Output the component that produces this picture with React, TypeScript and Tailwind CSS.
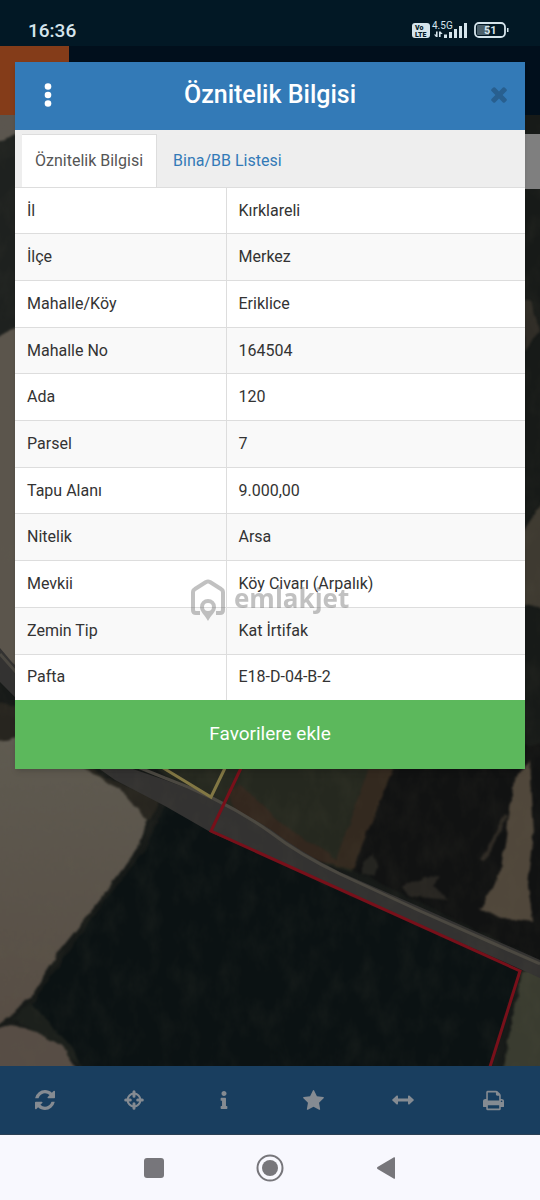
import React from 'react';
import { FaInfo } from 'react-icons/fa';

const attributes = [
  ['İl', 'Kırklareli'],
  ['İlçe', 'Merkez'],
  ['Mahalle/Köy', 'Eriklice'],
  ['Mahalle No', '164504'],
  ['Ada', '120'],
  ['Parsel', '7'],
  ['Tapu Alanı', '9.000,00'],
  ['Nitelik', 'Arsa'],
  ['Mevkii', 'Köy Civarı (Arpalık)'],
  ['Zemin Tip', 'Kat İrtifak'],
  ['Pafta', 'E18-D-04-B-2'],
];

const RefreshIcon = () => (
  <svg viewBox="0 0 1536 1536" className="size-5" fill="currentColor">
    <path d="M1511 928q0 5-1 7-64 268-268 434.5T764 1536q-146 0-282.5-55T238 1324l-129 129q-19 19-45 19t-45-19-19-45V960q0-26 19-45t45-19h448q26 0 45 19t19 45-19 45l-137 137q71 66 161 102t187 36q134 0 250-65t186-179q11-17 53-117 8-23 30-23h192q13 0 22.5 9.5t9.5 22.5zm25-800v448q0 26-19 45t-45 19h-448q-26 0-45-19t-19-45 19-45l138-138Q969 256 768 256q-134 0-250 65T332 500q-11 17-53 117-8 23-30 23H50q-13 0-22.5-9.5T18 608v-7q65-268 270-434.5T768 0q146 0 284 55.5T1297 212l130-129q19-19 45-19t45 19 19 45z" />
  </svg>
);

const CrosshairIcon = () => (
  <svg viewBox="0 0 20 20" className="size-5" fill="none" stroke="currentColor">
    <circle cx="10" cy="10" r="6.4" strokeWidth="2" />
    <path d="M10 1.7v4.6M10 13.7v4.6M1.7 10h4.6M13.7 10h4.6" strokeWidth="3" strokeLinecap="round" />
  </svg>
);

const StarIcon = () => (
  <svg viewBox="0 0 1664 1600" className="h-5 w-[21px]" fill="currentColor">
    <path d="M1664 615q0 22-26 48l-363 354 86 500q1 7 1 20 0 21-10.5 35.5T1321 1587q-19 0-40-12l-449-236-449 236q-22 12-40 12-21 0-31.5-14.5T301 1537q0-6 2-20l86-500L25 663Q0 636 0 615q0-37 56-46l502-73L783 41q19-41 49-41t49 41l225 455 502 73q56 9 56 46z" />
  </svg>
);

const WidthIcon = () => (
  <svg viewBox="0 0 22 10" className="h-[10px] w-[22px]" fill="currentColor">
    <path d="M.4 4.4 4.7.6Q6 0 6 1.4v2.200h10V1.400Q16 0 17.300.6l4.300 3.800q.6.6 0 1.200l-4.300 3.800Q16 10 16 8.600V6.400H6v2.200Q6 10 4.700 9.400L.4 5.600q-.6-.6 0-1.200z" />
  </svg>
);

const PrintIcon = () => (
  <svg viewBox="0 0 1664 1792" className="h-[23px] w-[21px]" fill="currentColor">
    <path d="M384 1536h896v-256H384v256zm0-640h896V512h-160q-40 0-68-28t-28-68V256H384v640zm1152 64q0-26-19-45t-45-19-45 19-19 45 19 45 45 19 45-19 19-45zm128 0v416q0 13-9.5 22.5t-22.5 9.5h-224v160q0 40-28 68t-68 28H352q-40 0-68-28t-28-68v-160H32q-13 0-22.5-9.5T0 1376V960q0-79 56.5-135.5T192 768h64V224q0-40 28-68t68-28h672q40 0 88 20t76 48l152 152q28 28 48 76t20 88v256h64q79 0 135.5 56.5T1664 960z" />
  </svg>
);

const tools = [
  { label: 'Yenile', icon: <RefreshIcon /> },
  { label: 'Konum', icon: <CrosshairIcon /> },
  { label: 'Bilgi', icon: <FaInfo className="size-[18px]" /> },
  { label: 'Favoriler', icon: <StarIcon /> },
  { label: 'Ölçüm', icon: <WidthIcon /> },
  { label: 'Yazdır', icon: <PrintIcon /> },
];

function StatusBar() {
  return (
    <div className="flex h-[46px] items-center justify-between bg-[#021825] pl-7 pr-[30px] pt-4 text-[#d5e4ec]">
      <span className="text-[19px] font-medium leading-6">16:36</span>
      <svg viewBox="0 0 98 20" className="h-5 w-[98px] overflow-visible" fill="currentColor">
        <rect x="0" y="2" width="18" height="15" rx="3" />
        <g fill="#021825" fontFamily="Roboto" fontWeight="900" fontSize="7">
          <text x="3" y="9">Vo</text>
          <text x="3" y="16">LTE</text>
        </g>
        <text x="20" y="8" fontFamily="Roboto" fontSize="10">4.5G</text>
        <path d="M24 10.500h1.600V16h-1.600l-2-2.400h2zM27 16V10.500h1.600l2 2.400h-2V16zM32 13.500h3V17h-3zM37 11h3v6h-3zM42 8h3v9h-3zM47 5h3v12h-3zM52 2h3v15h-3z" />
        <rect x="63" y="2" width="30" height="14" rx="4" fill="none" stroke="currentColor" strokeWidth="1.800" />
        <path d="M65 5q0-1 1-1h11v10H66q-1 0-1-1z" opacity=".35" />
        <path d="M95 7h1.500v4H95z" />
        <text x="72" y="13" fontFamily="Roboto" fontWeight="700" fontSize="11">51</text>
      </svg>
    </div>
  );
}

function SatelliteMap() {
  return (
    <svg
      viewBox="0 115 540 951"
      preserveAspectRatio="xMidYMid slice"
      className="absolute inset-0 size-full"
      aria-hidden="true"
    >
      <defs>
        <filter id="grain" x="0" y="0" width="100%" height="100%" colorInterpolationFilters="sRGB">
          <feTurbulence type="fractalNoise" baseFrequency=".05 .03" numOctaves="5" seed="8" />
          <feColorMatrix values="0 0 0 0 .4  0 0 0 0 .38  0 0 0 0 .3  .9 0 0 0 -.36" />
        </filter>
        <filter id="rough" x="-5%" y="-5%" width="110%" height="110%" colorInterpolationFilters="sRGB">
          <feTurbulence type="fractalNoise" baseFrequency=".07" numOctaves="3" seed="3" />
          <feDisplacementMap in="SourceGraphic" scale="6" xChannelSelector="R" yChannelSelector="G" />
          <feGaussianBlur stdDeviation="1" />
        </filter>
        <linearGradient id="soil" x1="0" y1="0" x2="0" y2="1">
          <stop offset="0" stopColor="#5f5b51" />
          <stop offset="1" stopColor="#574d44" />
        </linearGradient>
      </defs>
      <rect y="115" width="540" height="951" fill="#171a18" />
      <g filter="url(#rough)">
        <path d="M-10 105h30v30L-10 150z" fill="#5b564f" />
        <path d="M-10 145 20 132V330L-10 350z" fill="#1e211f" />
        <path d="M-10 342 20 325V670L-10 650z" fill="#5b554c" />
        <path d="M510 550 550 490V610L510 600z" fill="#3e3a31" />
        <path d="M520 300h10l10 30-15 20z" fill="#302d27" />
        <path d="M-10 700 30 710 100 775 160 800 150 820-10 790z" fill="#27251f" />
        <path d="M-10 742 40 735 87 770 120 790 147 820 140 845 100 900 60 950 30 997 12 1015-10 1032z" fill="url(#soil)" />
        <path d="M12 1018 30 1003 75 1035 100 1080 80 1066 45 1038z" fill="#1c201c" />
        <path d="M-10 1030 12 1025 40 1033 60 1045 85 1080H-10z" fill="#574d45" />
        <path d="M165 805 145 850 105 900 32 1004 70 1045 90 1080H485L520 970 320 882z" fill="#0b1213" />
        <path d="M130 750H400L352 872 300 855 212 805z" fill="#25281f" />
        <path d="M225 790l15-5 50 45 40 25 10 10-30-5-60-30z" fill="#33271e" />
        <path d="M375 750h27L354 870l-20-5z" fill="#33291f" />
        <path d="M403 745H550V965L352 870z" fill="#111212" />
        <path d="M514 780 530 760 534 835 528 885 533 922 502 918 480 909 500 875 507 830z" fill="#50473b" />
        <path d="M505 815l3 2-24 45-3-2z" fill="#2f2b25" />
        <path d="M402 888 422 878 440 876 432 886 448 900 410 896z" fill="#282622" />
        <path d="M362 862l12-8 4 10 -4 14-12-4z" fill="#242420" />
        <path d="M522 972 550 965V1080H500z" fill="#3a3c30" />
      </g>
      <path d="M0 648C35 690 75 735 130 768L165 780Q225 801 270 829 300 852 340 872L420 907 540 960V978L520 969 420 925 320 880 212 833 165 806 115 780Q50 735 0 682z" fill="#333231" />
      <path d="M0 654Q60 725 130 764L165 778Q225 800 270 832 300 855 340 874L420 911 540 964" fill="none" stroke="#4b4841" strokeWidth="3" />
      <rect y="115" width="540" height="951" filter="url(#grain)" opacity=".22" />
      <path d="M160 766 211 797 226 766" fill="none" stroke="#827744" strokeWidth="3" />
      <path d="M242 766 211 831 520 971 489 1070" fill="none" stroke="#78101a" strokeWidth="3" />
    </svg>
  );
}

function Watermark() {
  return (
    <div className="pointer-events-none absolute left-[175px] top-[516px] flex gap-2 text-[#777] opacity-45">
      <svg viewBox="0 0 36 44" className="h-11 w-9" fill="none" stroke="currentColor" strokeWidth="4" strokeLinejoin="round">
        <path d="M10 35H6q-3 0-3-3V14.500Q3 12 5 11L16 4q2-1 4 0l11 7q2 1 2 3.500V32q0 3-3 3h-4" />
        <path
          fill="currentColor"
          fillRule="evenodd"
          stroke="none"
          d="M18 21a8 8 0 0 0-8 8c0 5 5 8 8 14 3-6 8-9 8-14a8 8 0 0 0-8-8zm0 4a4 4 0 1 1 0 8 4 4 0 0 1 0-8z"
        />
      </svg>
      <span className="pt-1 font-['Open_Sans',sans-serif] text-[26px] font-bold leading-8">emlakjet</span>
    </div>
  );
}

function AttributeDialog() {
  return (
    <div
      role="dialog"
      aria-labelledby="dialog-title"
      className="absolute inset-x-[15px] top-[62px] bg-white text-[#333] shadow-md"
    >
      <div className="flex h-[68px] items-center justify-between bg-[#337ab7] px-[18px] pb-0.5">
        <button type="button" aria-label="Menü" className="flex w-[30px] justify-center text-white">
          <svg viewBox="0 0 8 24" className="h-6 w-2" fill="currentColor">
            <circle cx="4" cy="3.500" r="3.300" />
            <circle cx="4" cy="12" r="3.300" />
            <circle cx="4" cy="20.500" r="3.300" />
          </svg>
        </button>
        <h1 id="dialog-title" className="text-[25px] font-medium leading-8 text-white">
          Öznitelik Bilgisi
        </h1>
        <button type="button" aria-label="Kapat" className="flex w-[30px] justify-end text-[#285f8f]">
          <svg viewBox="100 366 1208 1188" className="size-4" fill="currentColor">
            <path d="M1298 1322q0 40-28 68l-136 136q-28 28-68 28t-68-28l-294-294-294 294q-28 28-68 28t-68-28L138 1390q-28-28-28-68t28-68l294-294-294-294q-28-28-28-68t28-68l136-136q28-28 68-28t68 28l294 294 294-294q28-28 68-28t68 28l136 136q28 28 28 68t-28 68L976 960l294 294q28 28 28 68z" />
          </svg>
        </button>
      </div>

      <div role="tablist" className="flex h-[58px] border-b border-[#ddd] bg-[#eee] pl-[7px] pt-1">
        <button
          type="button"
          role="tab"
          aria-selected="true"
          className="border-r border-t border-[#ddd] bg-white px-[13px] text-base text-[#555]"
        >
          Öznitelik Bilgisi
        </button>
        <button type="button" role="tab" aria-selected="false" className="px-4 text-base text-[#337ab7]">
          Bina/BB Listesi
        </button>
      </div>

      <table className="h-[512px] w-full border-collapse text-base">
        <tbody>
          {attributes.map(([name, value]) => (
            <tr key={name} className="border-t border-[#ddd] first:border-t-0 even:bg-[#f9f9f9]">
              <th scope="row" className="w-[211px] border-r border-[#ddd] px-3 text-left font-normal">
                {name}
              </th>
              <td className="px-3">{value}</td>
            </tr>
          ))}
        </tbody>
      </table>

      <button type="button" className="h-[69px] w-full bg-[#5cb85c] text-[19px] text-white">
        Favorilere ekle
      </button>
      <Watermark />
    </div>
  );
}

export default function App() {
  return (
    <div className="relative flex min-h-screen flex-col bg-[#021825] font-[Roboto,sans-serif]">
      <StatusBar />
      <header className="h-[69px] bg-[#010f1c]">
        <div className="h-full w-[69px] bg-[#843c19]" />
      </header>
      <main className="relative flex flex-1 flex-col items-end pt-[19px]">
        <SatelliteMap />
        <div className="relative h-[55px] w-10 bg-[#7f7f7f]" />
      </main>
      <nav className="grid h-[69px] grid-cols-6 border-b border-[#2a4055] bg-[#193e5f] pr-[2px] text-[#858b92]">
        {tools.map((tool) => (
          <button key={tool.label} type="button" aria-label={tool.label} className="flex items-center justify-center">
            {tool.icon}
          </button>
        ))}
      </nav>
      <footer className="flex h-[65px] items-center justify-center bg-[#f8f8fe] text-[#77767b]">
        <button type="button" aria-label="Son uygulamalar" className="flex w-[116px] justify-center">
          <span className="size-5 rounded-[3px] bg-current" />
        </button>
        <button type="button" aria-label="Ana ekran" className="flex w-[116px] justify-center">
          <svg viewBox="0 0 28 28" className="size-7">
            <circle cx="14" cy="14" r="12.500" fill="none" stroke="currentColor" strokeWidth="2" />
            <circle cx="14" cy="14" r="8" fill="currentColor" />
          </svg>
        </button>
        <button type="button" aria-label="Geri" className="flex w-[116px] justify-center">
          <svg viewBox="0 0 18 22" className="h-[22px] w-[18px]" fill="currentColor">
            <path d="M17 .3q1-.5 1 .7v20q0 1.200-1 .7L.5 12q-1-1 0-2z" />
          </svg>
        </button>
      </footer>
      <AttributeDialog />
    </div>
  );
}
